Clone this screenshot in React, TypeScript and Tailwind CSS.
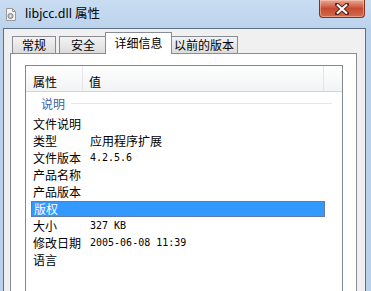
import React from "react";

const rows: { label: string; value?: string; selected?: boolean }[] = [
  { label: "文件说明" },
  { label: "类型", value: "应用程序扩展" },
  { label: "文件版本", value: "4.2.5.6" },
  { label: "产品名称" },
  { label: "产品版本" },
  { label: "版权", selected: true },
  { label: "大小", value: "327 KB" },
  { label: "修改日期", value: "2005-06-08 11:39" },
  { label: "语言" },
];

const cjk = "font-['Noto_Sans_CJK_SC','Noto_Sans',sans-serif]";
const mono = "font-['DejaVu_Sans_Mono','Liberation_Mono',monospace]";

const isLatin = (s: string) => /^[\x20-\x7e]+$/.test(s);

const FileIcon = () => (
  <svg width="12" height="13" viewBox="0 0 12 13">
    <path d="M1.5 0.5h6l3 3v9h-9z" fill="#f4f4f4" stroke="#9a9a9a" />
    <path d="M7.5 0.5v3h3" fill="none" stroke="#9a9a9a" />
    <circle cx="5.5" cy="8" r="2.6" fill="#b8b8b8" stroke="#7d7d7d" strokeWidth="0.8" />
    <circle cx="5.5" cy="8" r="0.9" fill="#f4f4f4" />
  </svg>
);

const Tab = ({ label, width, active }: { label: string; width: string; active?: boolean }) =>
  active ? (
    <div
      className={`${width} relative z-10 -mb-px -mx-[2px] flex h-[22px] items-start justify-center border border-b-0 border-[#898c95] bg-white pt-[2px] text-[12px] leading-[16px] text-black`}
    >
      {label}
    </div>
  ) : (
    <div
      className={`${width} flex h-[17px] items-center justify-center border border-b-0 border-[#898c95] bg-gradient-to-b from-[#f3f3f3] to-[#dcdcdc] text-[12px] leading-[16px] text-black`}
    >
      {label}
    </div>
  );

export default function App() {
  return (
    <div className={`h-[291px] w-[371px] overflow-hidden bg-[#b9d1ea] ${cjk}`}>
      {/* title bar */}
      <div className="flex h-[28px] items-start bg-gradient-to-b from-[#c9ddf2] to-[#bcd3ec]">
        <div className="mt-[8px] ml-[5px]">
          <FileIcon />
        </div>
        <div className="mt-[6px] ml-[8px] text-[12.5px] leading-[16px] text-black font-['Noto_Sans','Noto_Sans_CJK_SC',sans-serif]">
          libjcc.dll 属性
        </div>
        <div className="ml-auto mr-[6px] flex h-[18px] w-[46px] items-center justify-center rounded-b-[4px] border border-t-0 border-[#7a3326] bg-gradient-to-b from-[#e9a897] via-[#c84a33] to-[#d36a4c] shadow-[inset_0_0_0_1px_rgba(255,220,200,0.45)]">
          <svg width="14" height="12" viewBox="0 0 14 12">
            <path
              d="M2 1.5l10 9M12 1.5l-10 9"
              stroke="#5a2016"
              strokeWidth="4"
              strokeLinecap="square"
            />
            <path d="M2 1.5l10 9M12 1.5l-10 9" stroke="#ffffff" strokeWidth="2.2" />
          </svg>
        </div>
      </div>

      {/* dialog body */}
      <div className="ml-[3px] h-[300px] w-[363px] border border-[#5d6f86] bg-[#f0f0f0] pt-[4px] pl-[6px]">
        <div className="ml-[2px] flex h-[20px] items-end">
          <Tab label="常规" width="w-[44px]" />
          <div className="w-[3px]" />
          <Tab label="安全" width="w-[48px]" />
          <Tab label="详细信息" width="w-[67px]" active />
          <Tab label="以前的版本" width="w-[68px]" />
        </div>

        {/* tab panel */}
        <div className="h-[260px] w-[347px] border border-[#898c95] bg-white pt-[11px] pl-[14px]">
          <div className="h-[240px] w-[318px] border border-[#828790] bg-white">
            {/* header */}
            <div className="flex h-[26px] border-b border-[#d5d5d5] bg-gradient-to-b from-white to-[#f2f3f5] text-[12px] leading-[16px] text-black">
              <div className="w-[57px] border-r border-[#e3e5e8] pt-[8px] pl-[7px]">属性</div>
              <div className="w-[241px] border-r border-[#e3e5e8] pt-[8px] pl-[6px]">值</div>
            </div>

            {/* group */}
            <div className="flex h-[23px] items-center pr-[10px] pl-[15px]">
              <span className="text-[12px] leading-[16px] text-[#3a5ea8]">说明</span>
              <div className="ml-[6px] h-px flex-1 bg-[#e2e6ee]" />
            </div>

            {/* rows */}
            <div className="flex flex-col">
              {rows.map((r) => (
                <div key={r.label} className="flex h-[17px] items-center">
                  {r.selected ? (
                    <div className="ml-[5px] flex h-[16px] w-[294px] items-center border border-[#5d7ea6] bg-[#3399ff] pl-[2px] text-[12px] leading-[14px] text-white">
                      {r.label}
                    </div>
                  ) : (
                    <>
                      <div className="w-[64px] pl-[7px] text-[12px] leading-[14px] text-black">
                        {r.label}
                      </div>
                      {r.value && (
                        <div
                          className={`text-black ${
                            isLatin(r.value)
                              ? `${mono} text-[10px] leading-[14px]`
                              : "text-[12px] leading-[14px]"
                          }`}
                        >
                          {r.value}
                        </div>
                      )}
                    </>
                  )}
                </div>
              ))}
            </div>
          </div>
        </div>
      </div>
    </div>
  );
}
